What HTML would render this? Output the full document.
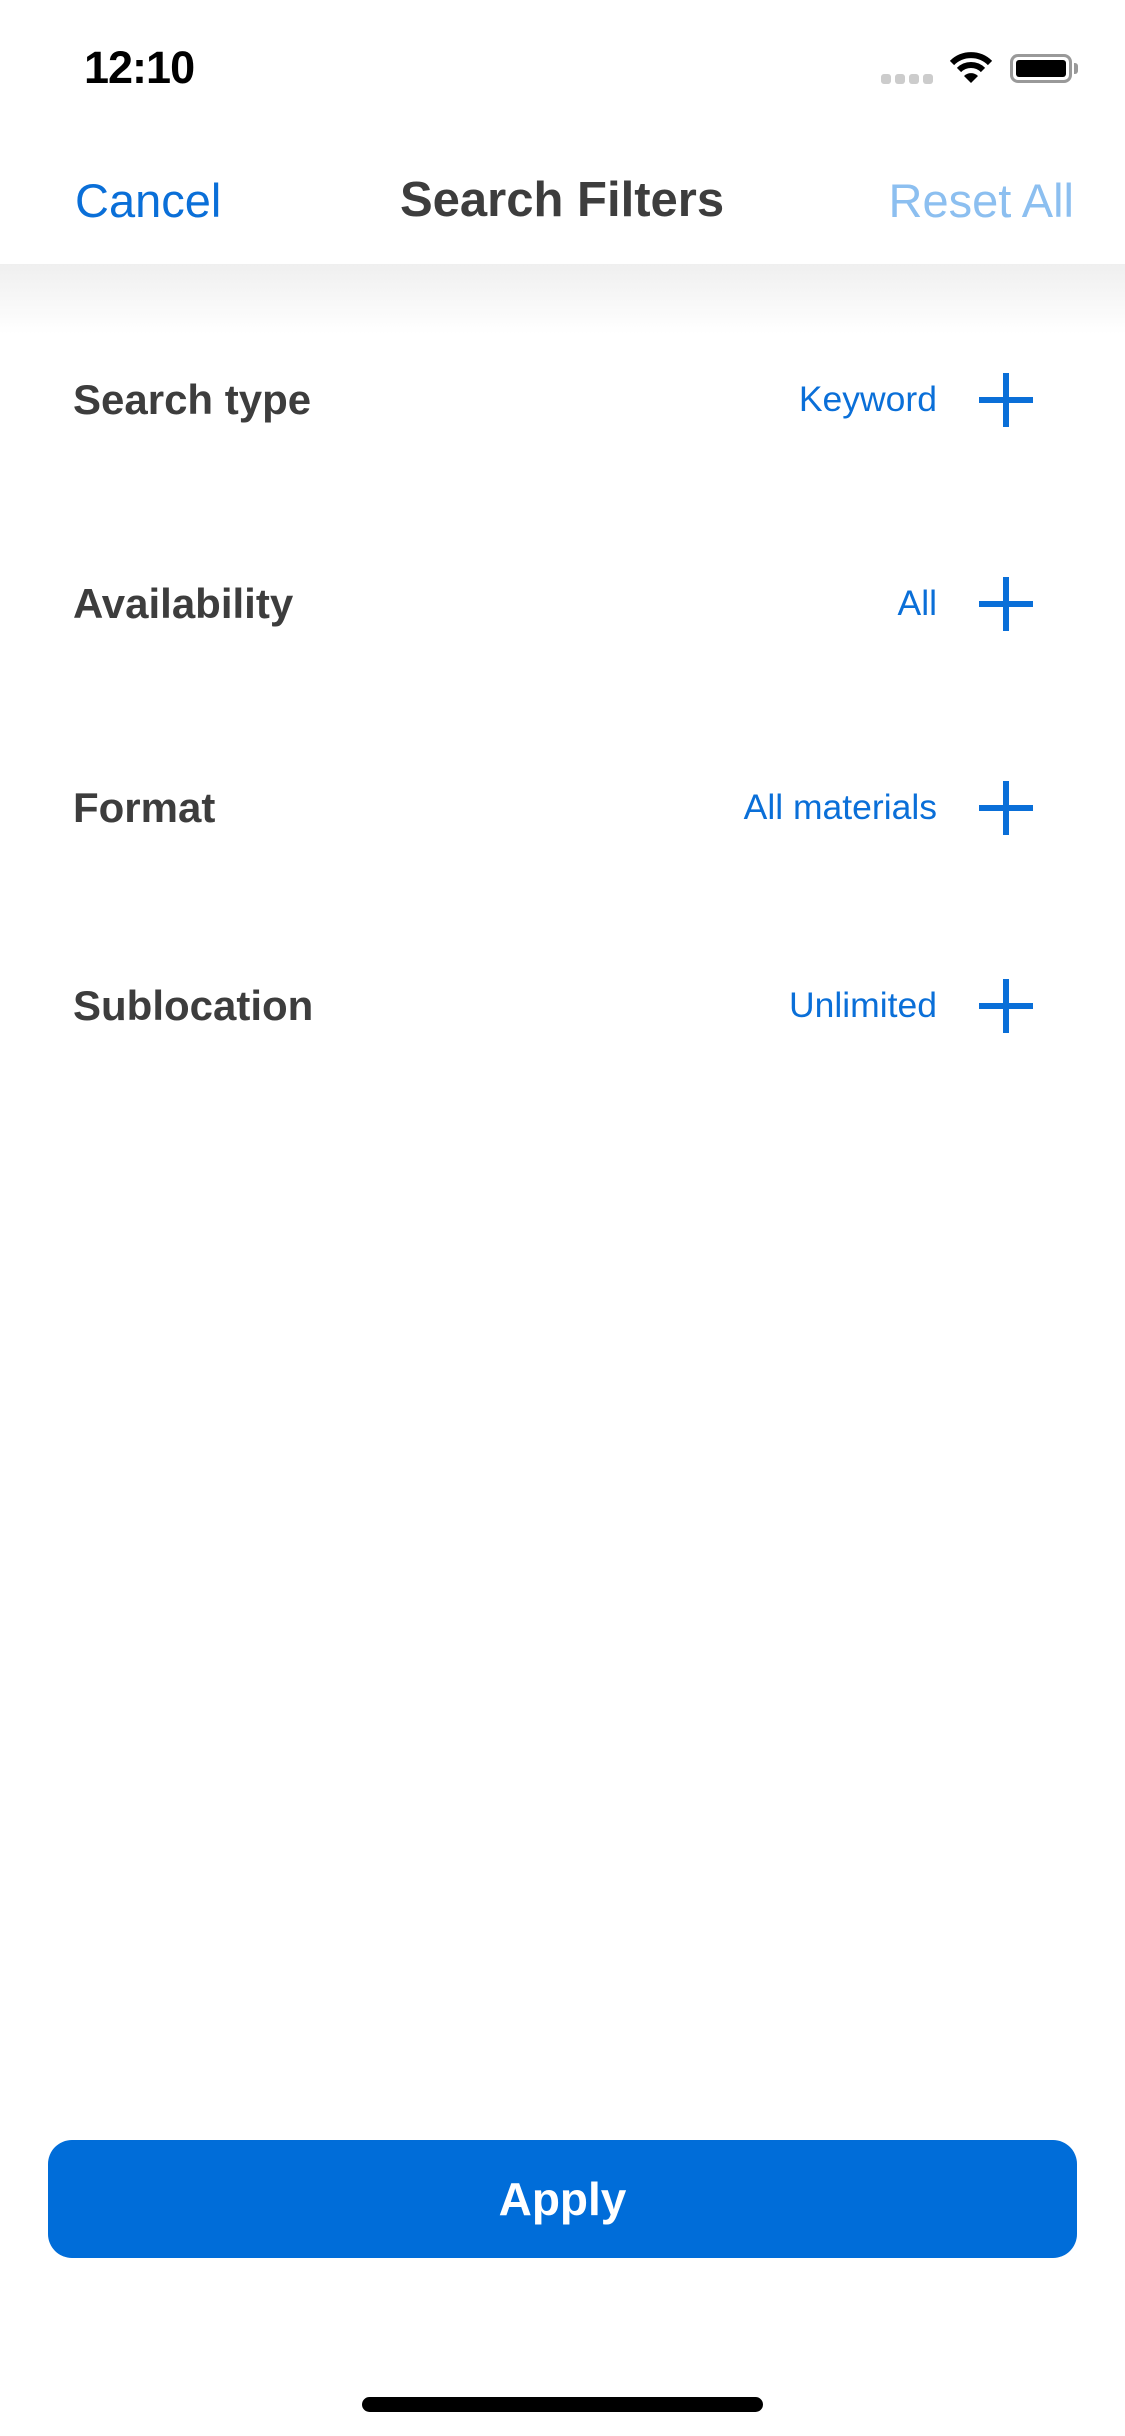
<!DOCTYPE html>
<html><head><meta charset="utf-8"><style>
*{margin:0;padding:0;box-sizing:border-box}
body{width:1125px;height:2436px;background:#fff;position:relative;overflow:hidden;font-family:"Liberation Sans",sans-serif}
.a{position:absolute;white-space:nowrap}
.hdr{position:absolute;left:0;top:0;width:1125px;height:264px;background:#fff}
.sh{position:absolute;left:0;top:264px;width:1125px;height:70px;background:linear-gradient(#efefef,#fff)}
.lbl{font-size:42px;font-weight:bold;color:#3d3d3d;left:73px}
.val{font-size:35.5px;color:#0a6fd8;right:188px}
.plus{position:absolute;width:54px;height:54px;left:979px}
.plus:before{content:"";position:absolute;left:24px;top:0;width:6px;height:54px;background:#0a6fd8}
.plus:after{content:"";position:absolute;left:0;top:24px;width:54px;height:6px;background:#0a6fd8}
</style></head><body>
<div class="hdr"></div>
<div class="sh"></div>
<div class="a" style="left:84px;top:42px;font-size:45px;font-weight:bold;color:#000;letter-spacing:-1px">12:10</div>
<div class="a" style="left:881px;top:74px;width:51px;height:10px">
<span style="position:absolute;left:0;width:10px;height:10px;border-radius:3px;background:#ccc"></span>
<span style="position:absolute;left:14px;width:10px;height:10px;border-radius:3px;background:#ccc"></span>
<span style="position:absolute;left:28px;width:10px;height:10px;border-radius:3px;background:#ccc"></span>
<span style="position:absolute;left:42px;width:10px;height:10px;border-radius:3px;background:#ccc"></span>
</div>
<svg class="a" style="left:950px;top:52px" width="42" height="32" viewBox="0 0 42 32"><path d="M2 11 A27 27 0 0 1 40 11" stroke="#000" stroke-width="6" fill="none"/><path d="M9 18 A17 17 0 0 1 33 18" stroke="#000" stroke-width="6" fill="none"/><path d="M14 24 L21 31 L28 24 A10 10 0 0 0 14 24Z" fill="#000"/></svg>
<div class="a" style="left:1010px;top:54px;width:62px;height:29px;border:3px solid #999;border-radius:8px"><div style="position:absolute;left:3px;top:3px;right:3px;bottom:3px;background:#000;border-radius:3px"></div></div>
<div class="a" style="left:1074px;top:63px;width:4px;height:11px;background:#999;border-radius:0 3px 3px 0"></div>
<div class="a" style="left:75px;top:173px;font-size:47px;color:#0a6fd8">Cancel</div>
<div class="a" style="left:400px;top:172px;font-size:49px;font-weight:bold;color:#3d3d3d">Search Filters</div>
<div class="a" style="right:51px;top:173px;font-size:47px;color:#8cbff0">Reset All</div>

<div class="a lbl" style="top:376px">Search type</div>
<div class="a val" style="top:379px">Keyword</div>
<div class="plus" style="top:373px"></div>
<div class="a lbl" style="top:580px">Availability</div>
<div class="a val" style="top:583px">All</div>
<div class="plus" style="top:577px"></div>
<div class="a lbl" style="top:784px">Format</div>
<div class="a val" style="top:787px">All materials</div>
<div class="plus" style="top:781px"></div>
<div class="a lbl" style="top:982px">Sublocation</div>
<div class="a val" style="top:985px">Unlimited</div>
<div class="plus" style="top:979px"></div>

<div class="a" style="left:48px;top:2140px;width:1029px;height:118px;background:#006dd9;border-radius:24px;color:#fff;font-size:46px;font-weight:bold;text-align:center;line-height:118px">Apply</div>
<div class="a" style="left:362px;top:2397px;width:401px;height:15px;background:#000;border-radius:8px"></div>
</body></html>
